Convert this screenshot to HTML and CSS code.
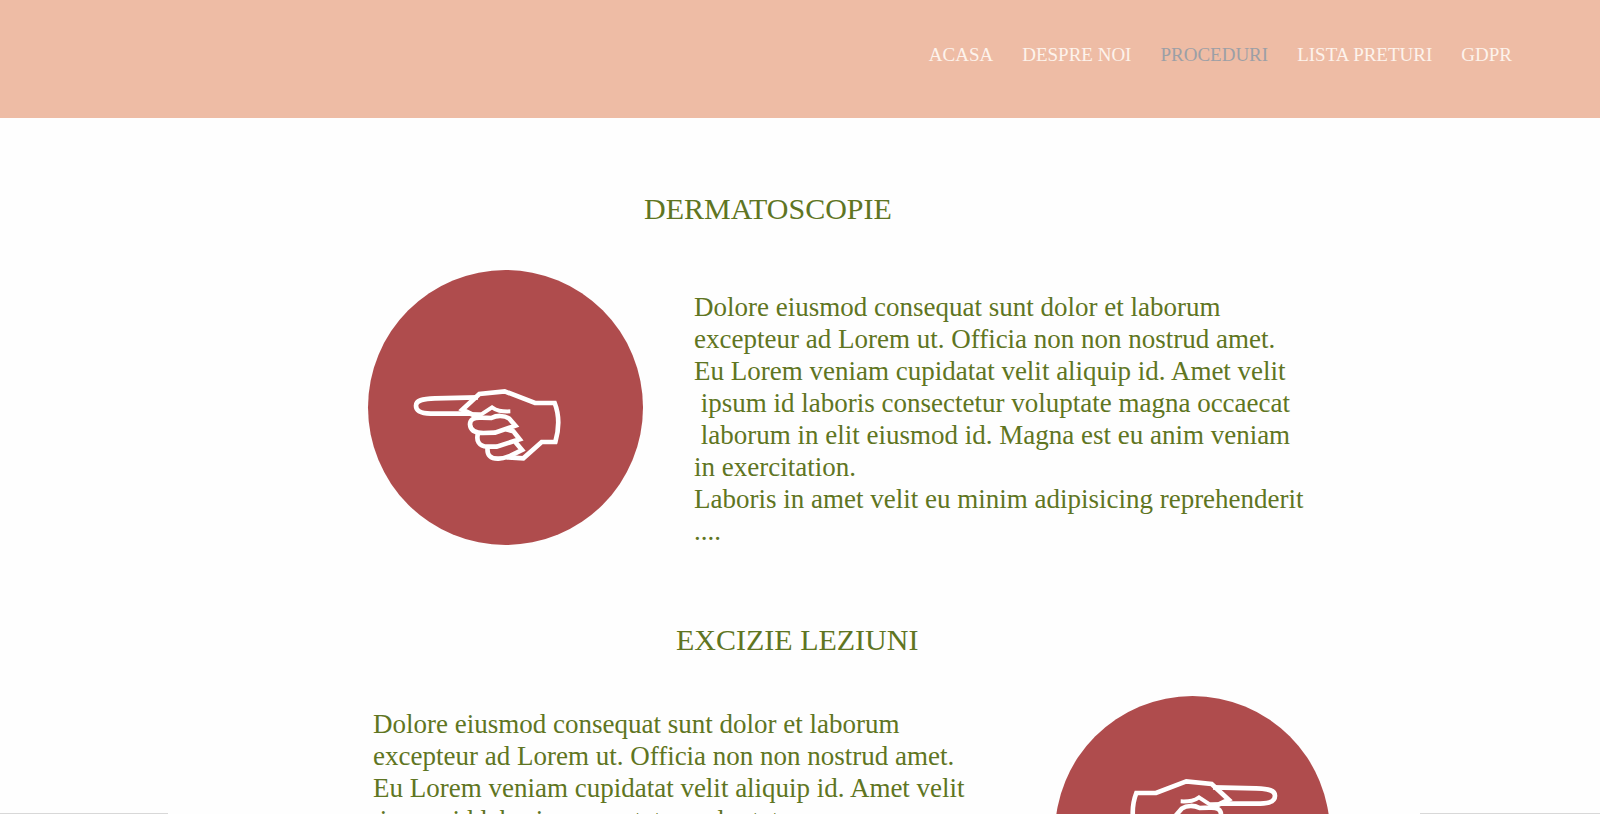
FILE: index.html
```html
<!DOCTYPE html>
<html lang="ro">
<head>
<meta charset="utf-8">
<title>Proceduri</title>
<link rel="stylesheet" href="styles.css">
</head>
<body>
<svg class="defs" aria-hidden="true">
  <symbol id="hand" viewBox="0 0 540 330">
    <g fill="none" stroke="#fff" stroke-width="14">
      <path d="M234 82L105 85C65 86 48 92 48 107C48 124 62 130 92 131L212 131"/>
      <path d="M236 136L218 134L187 119L238 72L314 64L405 99L464 99C480 140 477 178 466 216L425 216L370 265L320 262"/>
      <path d="M215 133L244 133L276 112C290 122 302 125 331 124" stroke-width="12"/>
      <path d="M274 144L245 143C220 141 210 150 210 163C211 180 223 189 250 189L285 188L346 167L328 146C312 135 290 136 274 144Z"/>
      <path d="M234 190C228 212 236 229 262 230L290 230L359 208L340 184L318 178"/>
      <path d="M263 233C260 256 272 267 296 266C312 266 318 262 332 257L366 240L346 216"/>
    </g>
  </symbol>
</svg>
<header class="header">
  <nav class="nav">
    <a href="#">ACASA</a>
    <a href="#">DESPRE NOI</a>
    <a href="#" class="active">PROCEDURI</a>
    <a href="#">LISTA PRETURI</a>
    <a href="#">GDPR</a>
  </nav>
</header>
<main class="main">
  <section class="procedure">
    <h2 class="title">DERMATOSCOPIE</h2>
    <div class="row">
      <div class="disc"><svg class="hand"><use href="#hand"/></svg></div>
      <p class="text">Dolore eiusmod consequat sunt dolor et laborum<br>excepteur ad Lorem ut. Officia non non nostrud amet.<br>Eu Lorem veniam cupidatat velit aliquip id. Amet velit<br>&nbsp;ipsum id laboris consectetur voluptate magna occaecat<br>&nbsp;laborum in elit eiusmod id. Magna est eu anim veniam<br>in exercitation.<br>Laboris in amet velit eu minim adipisicing reprehenderit<br>....</p>
    </div>
  </section>
  <section class="procedure reversed">
    <h2 class="title">EXCIZIE LEZIUNI</h2>
    <div class="row">
      <p class="text">Dolore eiusmod consequat sunt dolor et laborum<br>excepteur ad Lorem ut. Officia non non nostrud amet.<br>Eu Lorem veniam cupidatat velit aliquip id. Amet velit<br>&nbsp;ipsum id laboris consectetur voluptate magna</p>
      <div class="disc"><svg class="hand"><use href="#hand"/></svg></div>
    </div>
  </section>
</main>
<footer class="footer"><hr class="rule"><hr class="rule"></footer>
</body>
</html>
```

FILE: styles.css
```css
* { box-sizing: border-box; }

body {
  margin: 0;
  height: 100vh;
  overflow: hidden;
  display: flex;
  flex-direction: column;
  background: #fefefe;
  color: #5f7522;
  font-family: "Liberation Serif", serif;
}

.defs { display: none; }

.header {
  flex: none;
  height: 118px;
  padding: 44px 88px 0;
  background: #eebca5;
}

.nav {
  display: flex;
  justify-content: flex-end;
  gap: 29px;
  font-size: 19px;
  line-height: 22px;
}

.nav a { color: #fdf3ec; text-decoration: none; }
.nav .active { color: #9c9fa6; }

.main {
  flex: 1;
  min-height: 0;
  overflow: hidden;
  padding: 71px 270px 0 23%;
}

.title {
  margin: 0;
  padding-left: 276px;
  font-size: 30px;
  font-weight: 400;
  line-height: 40px;
}

.row {
  display: flex;
  gap: 51px;
  margin-top: 41px;
}

.disc {
  flex: none;
  width: 275px;
  height: 275px;
  padding: 100px 0 0 32px;
  border-radius: 50%;
  background: #af4c4d;
}

.hand { display: block; width: 180px; height: 110px; }

.text {
  margin: 0;
  padding-top: 21px;
  font-size: 27px;
  line-height: 32px;
  white-space: nowrap;
}

.reversed { margin-top: 73px; }
.reversed .title { padding-left: 308px; }
.reversed .row { justify-content: space-between; margin-top: 36px; }
.reversed .text { padding: 12px 0 0 5px; }
.reversed .disc { padding: 64px 0 0 56px; }
.reversed .hand { transform: scaleX(-1); }

.footer {
  flex: none;
  display: flex;
  justify-content: space-between;
  margin-top: -1px;
}

.rule {
  width: 168px;
  height: 1px;
  margin: 0;
  border: 0;
  background: #d8d8d8;
}

.rule:last-child { width: 180px; }
```
